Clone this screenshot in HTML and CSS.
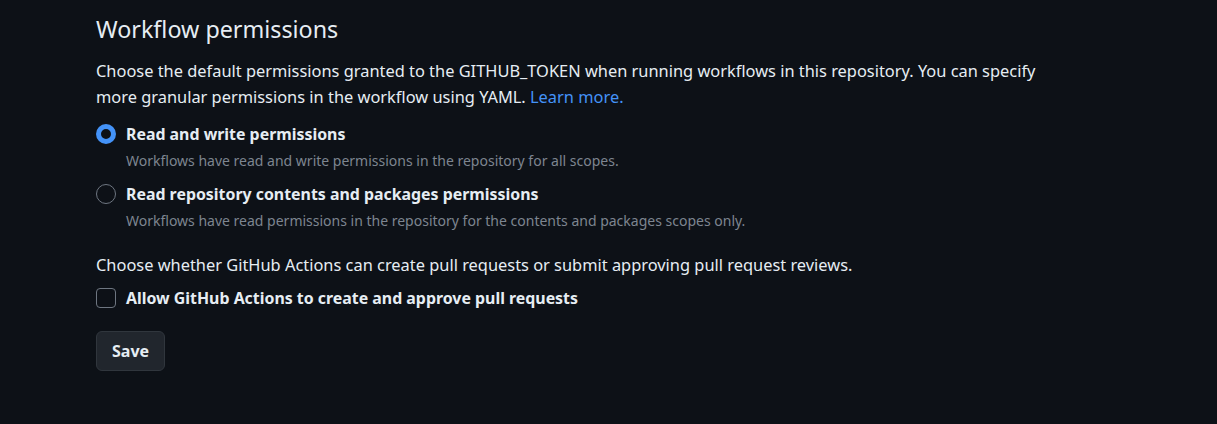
FILE: index.html
```html
<!DOCTYPE html>
<html lang="en">
<head>
<meta charset="utf-8">
<title>Workflow permissions</title>
<link rel="stylesheet" href="styles.css">
</head>
<body>
<main class="page">
  <h2 class="title">Workflow permissions</h2>
  <p class="desc">Choose the default permissions granted to the GITHUB_TOKEN when running workflows in this repository. You can specify more granular permissions in the workflow using YAML. <a class="link" href="#">Learn more.</a></p>

  <div class="options">
    <label class="option">
      <span class="radio checked"></span>
      <span class="option-body">
        <span class="option-label">Read and write permissions</span>
        <span class="option-note">Workflows have read and write permissions in the repository for all scopes.</span>
      </span>
    </label>
    <label class="option">
      <span class="radio"></span>
      <span class="option-body">
        <span class="option-label">Read repository contents and packages permissions</span>
        <span class="option-note">Workflows have read permissions in the repository for the contents and packages scopes only.</span>
      </span>
    </label>
  </div>

  <p class="desc2">Choose whether GitHub Actions can create pull requests or submit approving pull request reviews.</p>
  <label class="check-row">
    <span class="checkbox"></span>
    <span class="option-label">Allow GitHub Actions to create and approve pull requests</span>
  </label>

  <button class="btn" type="button">Save</button>
</main>
</body>
</html>
```

FILE: styles.css
```css
html, body {
  margin: 0;
  padding: 0;
  background: #0d1117;
}
body {
  font-family: "Noto Sans", "Liberation Sans", sans-serif;
  color: #e6edf3;
  font-size: 16.4px;
}
.page {
  padding: 12px 0 0 96px;
  width: 980px;
}
.title {
  margin: 0;
  font-size: 23.3px;
  font-weight: 400;
  line-height: 34px;
}
.desc {
  margin: 12px 0 0;
  line-height: 26px;
}
.link {
  color: #4493f8;
  text-decoration: none;
}
.options {
  margin-top: 11px;
  display: flex;
  flex-direction: column;
  gap: 7px;
}
.option {
  display: flex;
  gap: 10px;
  align-items: flex-start;
}
.radio {
  flex: none;
  width: 20px;
  height: 20px;
  box-sizing: border-box;
  border-radius: 50%;
  border: 1px solid #6e7681;
  margin-top: 3px;
}
.radio.checked {
  border: 5px solid #4493f8;
  background: #0d1117;
}
.option-body {
  display: flex;
  flex-direction: column;
}
.option-label {
  font-weight: 700;
  font-size: 15.9px;
  line-height: 26px;
}
.option-note {
  color: #7d8590;
  font-size: 14px;
  line-height: 26px;
  margin-top: 1px;
}
.desc2 {
  margin: 18px 0 0;
  line-height: 26px;
}
.check-row {
  display: flex;
  gap: 10px;
  align-items: center;
  margin-top: 7px;
}
.checkbox {
  flex: none;
  width: 20px;
  height: 20px;
  box-sizing: border-box;
  border: 1px solid #6e7681;
  border-radius: 4px;
}
.btn {
  display: block;
  margin-top: 20px;
  height: 40px;
  padding: 0 15px;
  font-family: inherit;
  font-size: 16px;
  font-weight: 700;
  color: #e6edf3;
  background: #21262d;
  border: 1px solid #30363d;
  border-radius: 6px;
}
```
